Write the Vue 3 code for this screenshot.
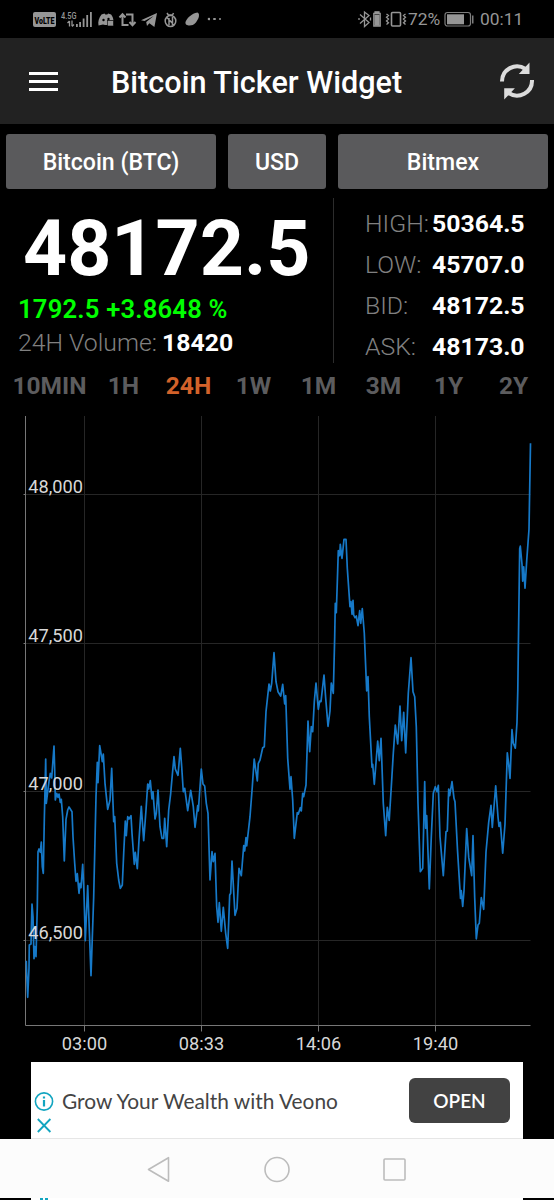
<template>
  <div class="screen">
    <div class="status-bar">
      <svg class="status-icons" width="210" height="38" viewBox="0 0 210 38" fill="#969696">
        <rect x="33" y="12" width="23" height="15" rx="2" />
        <text x="34.500" y="23.500" class="volte" textLength="20" lengthAdjust="spacingAndGlyphs">VoLTE</text>
        <text x="61" y="18.500" class="net" textLength="15.5" lengthAdjust="spacingAndGlyphs">4.5G</text>
        <path d="M69.5 21v5.5M67.5 23l2-2M72 20.500v5.5M72 26.500l2-2" stroke="#969696" stroke-width="1.300" fill="none" />
        <path d="M76 24h1.800v3H76zM79.200 22h1.800v5h-1.800zM82.700 18.500h1.800V27h-1.800zM86.300 15h1.800v12h-1.800zM90 12h1.800v15H90z" />
        <!-- game pad -->
        <path d="M101.500 14.500l3-1 .8 1h2l.8-1 3 1c1.500 2 2.300 4 2.300 6H108v4.500h-3l-2-.5-4.500 1c-.8-4 .5-8 3-11z" />
        <circle cx="103.500" cy="20" r="1.200" fill="#000" /><circle cx="108.500" cy="19" r="1.200" fill="#000" />
        <rect x="107.500" y="20.500" width="6" height="5.500" stroke="#000" stroke-width=".6" />
        <!-- repost -->
        <g fill="none" stroke="#969696" stroke-width="2">
          <path d="M119.500 17.500l3-3.200 3 3.200M122.500 15v10h6M126 14.500h6.500v9M129.500 22l3 3.200 3-3.200" />
        </g>
        <path d="M141 20.200l16-7.200-2.600 14-5-3.700-2.400 2.800-.8-4 7.500-6-9.200 5z" />
        <!-- bug -->
        <g fill="none" stroke="#969696" stroke-width="1.500">
          <ellipse cx="170.500" cy="21" rx="5.300" ry="5.500" />
          <path d="M167 17.500l7 7.500M169 18v7M172.500 17v8M167 13l2 3M173.500 13l-1.500 3M168 15h5" />
        </g>
        <path d="M185.500 22c1.500-4 6-8.500 12-9.500 1.500.5 2 2.500 1 5.500-2 4-4 7.500-9 7.500-2.500 0-4.500-1-4-3.500z" />
        <circle cx="209" cy="19" r="1.300" />
      </svg>
      <span class="dots"><i></i><i></i></span>
      <span class="spacer"></span>
      <svg width="50" height="38" viewBox="0 0 50 38" fill="none" stroke="#969696" stroke-width="1.300">
        <path d="M2 14.500l9 8-4.500 4V12l4.500 3.500-9 8M1 18v2M12.500 17.500v3" />
        <path d="M15.800 13.500h6.400v12.500h-6.400z" />
        <path d="M17 15.500h4v9.500h-4zM17 11.800h4v1h-4z" fill="#969696" />
        <rect x="33.500" y="12.500" width="9" height="13.500" rx="1" stroke-width="1.600" />
        <path d="M28.500 14l2 1.500-2 1.800 2 1.800-2 1.800 2 1.800-2 1.800M47.500 14l-2 1.500 2 1.800-2 1.800 2 1.800-2 1.800 2 1.800" />
      </svg>
      <span class="percent">72%</span>
      <svg width="31" height="38" viewBox="0 0 31 38">
        <rect x="1" y="12.500" width="25.500" height="13.500" rx="2.500" fill="none" stroke="#7d7d7d" stroke-width="1.200" />
        <rect x="3" y="14.300" width="17" height="10" fill="#969696" />
        <path d="M28 15.500h1.500v8H28z" fill="#7d7d7d" />
      </svg>
      <span class="clock">00:11</span>
    </div>

    <header class="app-bar">
      <div class="menu"><i></i><i></i><i></i></div>
      <h1>Bitcoin Ticker Widget</h1>
      <svg class="refresh" width="36" height="38" viewBox="0 0 36 38">
        <g fill="none" stroke="#dcdcdc" stroke-width="4">
          <path d="M3 19.500A15 15 0 0 1 26.500 7" />
          <path d="M33 18A15 15 0 0 1 9.500 31" />
        </g>
        <path d="M30.500 .5V12H19.800zM5.200 37.500V26.300h10.700z" fill="#dcdcdc" />
      </svg>
    </header>

    <div class="selectors">
      <button class="wide">Bitcoin (BTC)</button>
      <button class="narrow">USD</button>
      <button class="wide">Bitmex</button>
    </div>

    <section class="summary">
      <div class="main">
        <div class="price">48172.5</div>
        <div class="change">1792.5 +3.8648 %</div>
        <div class="volume"><span>24H Volume:</span><b>18420</b></div>
      </div>
      <div class="stats">
        <div v-for="s in stats" :key="s.label" class="stat">
          <span>{{ s.label }}</span><b>{{ s.value }}</b>
        </div>
      </div>
    </section>

    <nav class="ranges">
      <a v-for="r in ranges" :key="r" :class="{ active: r === selected }" @click="selected = r">{{ r }}</a>
    </nav>

    <svg class="chart" width="554" height="662" viewBox="0 400 554 662">
      <g v-for="t in yTicks" :key="t.label">
        <line x1="26" x2="530.5" :y1="t.y" :y2="t.y" stroke="#262626" />
        <line x1="23.5" x2="26" :y1="t.y" :y2="t.y" stroke="#777" />
      </g>
      <g v-for="t in xTicks" :key="t.label">
        <line :x1="t.x" :x2="t.x" y1="416" y2="1025" stroke="#262626" />
        <line :x1="t.x" :x2="t.x" y1="1026" y2="1031.500" stroke="#777" />
        <text :x="t.x" y="1050" text-anchor="middle">{{ t.label }}</text>
      </g>
      <path d="M25.500 416v609.500h505" fill="none" stroke="#777" />
      <polyline :points="points" fill="none" stroke="#1679c8" stroke-width="1.700" stroke-linejoin="round" />
      <text v-for="t in yTicks" :key="t.label" x="28.300" :y="t.y - 1.5">{{ t.label }}</text>
    </svg>

    <div class="ad">
      <div class="ad-marks">
        <svg width="20" height="42" viewBox="0 0 20 42" fill="none" stroke="#12a5c0" stroke-width="1.600">
          <circle cx="10" cy="10.500" r="8.600" />
          <path d="M10 9v6.500M10 5.500v2" stroke-width="2.200" />
          <path d="M3.800 28l12.600 13M16.400 28l-12.600 13" stroke-width="1.800" />
        </svg>
      </div>
      <span class="ad-text">Grow Your Wealth with Veono</span>
      <button class="open">OPEN</button>
    </div>

    <div class="nav-bar">
      <svg width="554" height="59" viewBox="0 0 554 59" fill="none" stroke="#bcbcbc" stroke-width="1.600" stroke-linejoin="round">
        <path d="M148.500 30.500L168.500 18.700v23.600z" />
        <circle cx="277" cy="30.500" r="12" />
        <rect x="384" y="20" width="21" height="21" rx="1" />
      </svg>
    </div>
    <div class="bottom-edge">
      <div><i></i><i></i></div>
    </div>
  </div>
</template>

<script setup>
import { ref } from 'vue'

const selected = ref('24H')
const ranges = ['10MIN', '1H', '24H', '1W', '1M', '3M', '1Y', '2Y']

const stats = [
  { label: 'HIGH:', value: '50364.5' },
  { label: 'LOW:', value: '45707.0' },
  { label: 'BID:', value: '48172.5' },
  { label: 'ASK:', value: '48173.0' }
]

const yTicks = [
  { label: '48,000', y: 494.5 },
  { label: '47,500', y: 643.5 },
  { label: '47,000', y: 791.5 },
  { label: '46,500', y: 940.5 }
]

const xTicks = [
  { label: '03:00', x: 84.5 },
  { label: '08:33', x: 201.5 },
  { label: '14:06', x: 318.5 },
  { label: '19:40', x: 435.5 }
]

// 24h price line
const points = `
26.3,960.7 26.7,973 27.7,997.3 29,968 29.3,945 31,944 32,904 33,916.7 34,958.7 34.7,946.7 36,956.7
37.3,906.7 38,851.7 39,849 40.3,852.3 41.3,842 42.3,866.7 43.3,873.3 44.3,820 45.7,759 46.3,803.3
47.7,791.7 49,781.7 50.3,773.3 51.7,778 54,746 54.7,770 55.3,800 56.7,793.3 58,797.3 59,794 60.3,802.3
61.3,799.3 62.7,816.7 64.3,861 66,819.3 67.7,810 69,807 72,811.7 73,836.7 74.7,863.3 76,881.3 77.3,873.7
79,893.3 80,883.3 81,887.7 82.7,864.3 84,893.3 85.3,940.7 87.7,885.7 91,975.7 93.7,896.7 96,796.7
97.3,762.3 98,782.7 99.7,745.7 101,753.3 102.3,761.7 103.3,754 105,783.3 107.7,809.3 110,800 111.7,768.3
113.7,821.7 114.7,816.7 116.7,863.3 118.7,880 120.3,888.3 122.3,885 123.7,853.3 125.3,821 126.3,835.7
127.7,816.7 129,819 131,815.7 132,833.3 134.3,864.3 135.3,852.3 137.3,868.7 139,840 141.3,806.3
143.7,840.7 146,810 147.7,784 148.7,789 150.3,780.7 152,799 153,791.7 155,819 156.3,813.3 158,790
160,826.7 162,838.3 163.7,838.3 164.7,818.3 166.7,846.7 168.7,810 170.7,793.3 172.3,775 174,756.7
175.3,769 178,775.3 180.3,748.3 181.7,766.7 183.3,791.7 184.7,788.3 187.7,810.7 190.7,790.3 193.3,806.7
195,827.3 197.7,805.7 198.3,811 201.3,769 203,784 204.7,786 206.3,803.3 208,813.3 210,880 212,851.7
213.3,861.7 215,853.3 216.7,906.7 218,922.3 219.3,902.7 221.3,931.3 223.3,907.3 225.7,933.3 227.7,948.3
229.7,895 230.7,893.3 232,861 235,915.3 237,908.3 239,868.3 241.3,875.7 243.7,845.7 244.7,851 246,837.7
246.7,846 250,816.7 252.3,786.7 254.2,759 257.3,781 258.3,763.3 260,760 262.7,747.7 264.3,746.7 266,711.7
269,684 270.3,691 271.7,683.3 274,652.7 276,681.7 278,691.7 280.7,696 282.7,684.3 284.7,704 285.7,695.7
287.7,758.3 290,789.3 291,776.7 292.7,800 294.3,838.3 297.3,812.7 298.3,814 300.3,807.7 301.3,811
302.7,793.3 303.7,796.7 306,785 308,721 309.7,751.7 311.3,726.7 312.7,731.7 314.3,701.7 316,683
318.3,709.3 319.7,701 321,701.7 324,675 325.7,698.3 328,726.3 330,711 331.3,683 333.3,693.3 334.7,636.7
335.3,603.3 336.3,612.7 337.7,570 338.3,550.7 339.7,555.7 340.3,544.3 342,558.3 344,539.3 346,539.3
347.3,568.3 350,606.7 351,601.7 352,614.3 353,600.3 353.7,615 355,617.7 356.3,616 358,625.7 359.7,610.7
360.7,623.3 362.3,608.7 364.3,633.3 366.7,691 368,676.7 369.3,716.7 372,767.3 372.7,764.3 374.3,784.3
377.7,741 379.3,760.7 381,738.3 383.3,803.3 385.7,835.7 387.3,807.3 389.2,820.5 391.3,786.7 393.3,753.3
395.3,725 397.7,744 400,706 401.7,740.7 403.7,712.3 405.7,753 408.3,693.3 411,657.7 413,691.7 414.7,696.7
416.3,726.7 418,803.3 420.3,871.7 422.7,868.3 424.7,781.7 425.7,828.3 426.7,815.7 429.3,889 431.3,836.7
433.3,793.3 435.3,786.7 437,791.7 438.3,785.3 440,836.7 443.3,875.7 446,831.7 447.3,831 448.7,789
449.7,795.7 452,781.7 454,798.3 455,801.7 457.5,850 460.5,898.5 461.3,890.7 462.7,906.5 464,890.7
466.7,828.6 468.7,857.4 471.7,875.6 473,835.6 474.7,897.7 476.3,938.8 478,925 479.3,923.3 481.3,897.7
483.7,909.3 486,852 488.7,822.3 491,805.4 492.3,827.5 495.7,785.8 498,817 499,826.5 500.3,822.3
502.7,853.2 505,824 507.3,752.8 508.7,764.4 510,778.4 512,729.6 513.3,743.3 515.3,748.2 517,722.3
517.8,690 518.7,620.5 519.7,548.6 520.3,546.1 522,564.4 522.7,581.2 523.7,566.8 525,588.2 526.7,560.9
529,529.3 530.5,443.3`
</script>

<style>
body {
  background: #000;
}
</style>

<style scoped>
.screen {
  width: 554px;
  height: 1200px;
  overflow: hidden;
  background: #000;
  color: #fff;
  font-family: Roboto, sans-serif;
  display: flex;
  flex-direction: column;
}

.screen > * {
  flex-shrink: 0;
}

svg {
  display: block;
}

button {
  border: 0;
  padding: 0;
  color: #fff;
  font-family: inherit;
}

.status-bar {
  height: 38px;
  display: flex;
  align-items: center;
  color: #969696;
  font-size: 17.4px;
}

.volte {
  font-size: 9.5px;
  font-weight: 900;
  fill: #000;
}

.net {
  font-size: 9.5px;
  font-weight: 500;
}

.dots {
  display: flex;
  gap: 3px;
  margin-left: 3px;
}

.dots i {
  width: 2.5px;
  height: 2.5px;
  border-radius: 50%;
  background: #969696;
}

.spacer {
  flex: 1;
}

.percent {
  width: 36px;
}

.clock {
  width: 79px;
  padding-left: 5px;
  box-sizing: border-box;
}

.app-bar {
  height: 86px;
  padding: 0 19px 0 29px;
  display: flex;
  align-items: center;
  background: #222;
}

.menu {
  width: 29px;
  display: flex;
  flex-direction: column;
  gap: 5px;
}

.menu i {
  height: 3px;
  background: #fff;
}

h1 {
  flex: 1;
  margin: 3px 0 0 53px;
  font-size: 30.6px;
  font-weight: 500;
  white-space: nowrap;
}

.selectors {
  display: flex;
  gap: 12px;
  padding: 10px 6px 0;
}

.selectors button {
  height: 55px;
  padding-top: 2px;
  border-radius: 3px;
  background: #5a5a5c;
  font-size: 23.1px;
  font-weight: 500;
}

.wide {
  width: 210px;
}

.narrow {
  width: 98px;
}

.summary {
  height: 165px;
  margin-top: 9px;
  display: flex;
}

.main {
  width: 334px;
  box-sizing: border-box;
  padding-left: 18px;
  border-right: 1px solid #2c2c2c;
  white-space: nowrap;
}

.price {
  height: 95px;
  padding-left: 5px;
  line-height: 102px;
  font-size: 77px;
  font-weight: 700;
}

.change {
  height: 33px;
  line-height: 32px;
  font-size: 25.6px;
  font-weight: 600;
  letter-spacing: 0.2px;
  color: #0f0;
}

.volume {
  display: flex;
  line-height: 33px;
  font-size: 24.8px;
  font-weight: 340;
  color: #808080;
}

.volume span {
  width: 144px;
}

.volume b,
.stat b {
  color: #fff;
  font-weight: 700;
}

.stats {
  padding: 5px 0 0 31px;
}

.stat {
  height: 41px;
  line-height: 41px;
  display: flex;
  font-size: 24.8px;
  font-weight: 340;
  color: #808080;
}

.stat span {
  width: 67px;
}

.ranges {
  height: 37px;
  padding-left: 8px;
  display: flex;
  line-height: 45px;
  font-size: 24.5px;
  font-weight: 700;
  color: #5c5c5e;
}

.ranges a {
  width: 65px;
  text-align: center;
}

.ranges a:first-child {
  width: 83px;
}

.ranges .active {
  color: #d2622a;
}

.chart text {
  font-size: 18.2px;
  fill: #d8d8d8;
}

.ad {
  width: 492px;
  height: 77px;
  margin-left: 31px;
  box-sizing: border-box;
  padding-right: 13px;
  display: flex;
  align-items: center;
  background: #fff;
  border-bottom: 1px solid #e6e6e6;
}

.ad-marks {
  width: 31px;
  padding: 24px 0 0 3px;
  box-sizing: border-box;
}

.ad-text {
  flex: 1;
  font-size: 20.9px;
  font-family: Lato, sans-serif;
  color: #444;
}

.open {
  width: 101px;
  height: 45px;
  border-radius: 6px;
  background: #424242;
  font: 600 19px Lato, sans-serif;
}

.nav-bar {
  height: 59px;
  background: #fcfcfc;
}

.bottom-edge div {
  width: 492px;
  height: 2px;
  margin-left: 31px;
  padding-left: 9px;
  box-sizing: border-box;
  display: flex;
  gap: 2px;
  background: #fff;
}

.bottom-edge i {
  width: 3px;
  background: #12a5c0;
}
</style>
